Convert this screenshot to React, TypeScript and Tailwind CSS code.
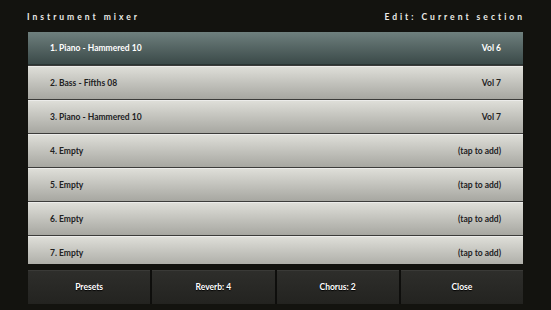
import React from 'react';

const rows = [
  { name: '1. Piano - Hammered 10', right: 'Vol 6', selected: true },
  { name: '2. Bass - Fifths 08', right: 'Vol 7' },
  { name: '3. Piano - Hammered 10', right: 'Vol 7' },
  { name: '4. Empty', right: '(tap to add)' },
  { name: '5. Empty', right: '(tap to add)' },
  { name: '6. Empty', right: '(tap to add)' },
  { name: '7. Empty', right: '(tap to add)' },
];

const buttons = ['Presets', 'Reverb: 4', 'Chorus: 2', 'Close'];

export default function App() {
  return (
    <div
      className="w-[551px] h-[310px] bg-[#13130f] overflow-hidden flex flex-col"
      style={{ fontFamily: 'Lato, "Liberation Sans", sans-serif' }}
    >
      {/* Header */}
      <div className="flex justify-between items-center h-[32px] pl-[27px] pr-[26px] pt-[2px] text-[8.5px] font-bold tracking-[3px] text-[#ececE8]">
        <span>Instrument mixer</span>
        <span>Edit: Current section</span>
      </div>

      {/* Instrument list */}
      <div className="mx-[28px] h-[232px] overflow-hidden flex flex-col bg-[#3c3c3a]">
        {rows.map((r, i) => (
          <div
            key={i}
            className={
              r.selected
                ? 'shrink-0 h-[33px] mb-[1px] flex items-center justify-between px-[22px] bg-gradient-to-b from-[#6f807e] to-[#3b4a49] border-b border-[#2a3534] text-white text-[8.5px] font-bold'
                : 'shrink-0 h-[33px] mb-[1px] flex items-center justify-between px-[22px] bg-gradient-to-b from-[#deded8] to-[#a7a7a1] border-t border-[#ececea] text-[#22221f] text-[8.5px] font-bold'
            }
          >
            <span>{r.name}</span>
            <span>{r.right}</span>
          </div>
        ))}
      </div>

      {/* Bottom buttons */}
      <div className="mx-[28px] mt-[6px] h-[34px] grid grid-cols-4 gap-[2px] bg-[#0e0e0c]">
        {buttons.map((b) => (
          <div
            key={b}
            className="flex items-center justify-center bg-gradient-to-b from-[#2e2e2b] to-[#232320] border-t border-[#3a3a37] text-white text-[8.5px] font-bold [text-shadow:0_1px_1px_#000]"
          >
            {b}
          </div>
        ))}
      </div>
    </div>
  );
}
